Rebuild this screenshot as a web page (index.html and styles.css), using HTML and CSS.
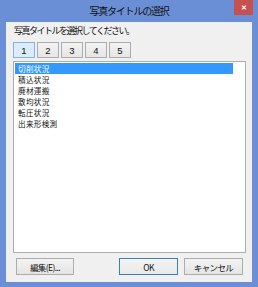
FILE: index.html
```html
<!DOCTYPE html>
<html lang="ja">
<head>
    <meta charset="UTF-8">
    <title>写真タイトルの選択</title>
    <link rel="stylesheet" href="styles.css">
</head>
<body>
    <div class="window">
        <div class="titlebar">
            <span></span>
            <span class="title">写真タイトルの選択</span>
            <span class="close">&#x2715;</span>
        </div>

        <div class="client">
            <p class="prompt">写真タイトルを選択してください。</p>

            <div class="tabs">
                <button class="tab active">1</button>
                <button class="tab">2</button>
                <button class="tab">3</button>
                <button class="tab">4</button>
                <button class="tab">5</button>
            </div>

            <ul class="listbox">
                <li class="item selected">切削状況</li>
                <li class="item">積込状況</li>
                <li class="item">廃材運搬</li>
                <li class="item">敷均状況</li>
                <li class="item">転圧状況</li>
                <li class="item">出来形検測</li>
            </ul>

            <div class="actions">
                <button class="btn edit">編集(E)...</button>
                <span class="spacer"></span>
                <button class="btn default">OK</button>
                <button class="btn">キャンセル</button>
            </div>
        </div>
    </div>
</body>
</html>
```

FILE: styles.css
```css
* {
    margin: 0;
    padding: 0;
    box-sizing: border-box;
    font-family: 'Noto Sans CJK JP', 'Noto Sans', sans-serif;
}

body {
    background-color: #6b8fd6;
}

.window {
    width: 258px;
    height: 287px;
    background-color: #6b8fd6;
    display: flex;
    flex-direction: column;
    padding: 0 6px 5px 6px;
}

/* タイトルバー */
.titlebar {
    height: 22px;
    display: grid;
    grid-template-columns: 1fr auto 1fr;
    align-items: start;
}

.title {
    font-size: 10px;
    letter-spacing: -1.2px;
    color: #111;
    line-height: 22px;
}

.close {
    justify-self: end;
    width: 19px;
    height: 15px;
    background-color: #c75050;
    color: white;
    font-size: 7px;
    font-weight: bold;
    line-height: 15px;
    text-align: center;
    margin-right: -1px;
}

.client {
    flex: 1;
    background-color: #f0f0f0;
    padding: 3px 6px 0 7px;
    display: flex;
    flex-direction: column;
}

.prompt {
    font-size: 9px;
    letter-spacing: -1.5px;
    line-height: 12px;
    color: #111;
    padding-left: 1px;
}

.tabs {
    display: flex;
    gap: 2px;
    margin-top: 5px;
}

.tab {
    width: 22px;
    height: 16px;
    border: 1px solid #acacac;
    background: linear-gradient(#f2f2f2, #e6e6e6);
    font-size: 9.5px;
    color: #111;
    font-family: 'Liberation Sans', sans-serif;
}

.tab.active {
    background: #dcecfc;
    border-color: #7eb4ea;
}

.listbox {
    list-style: none;
    margin-top: 3px;
    width: 233px;
    height: 192px;
    background-color: white;
    border: 1px solid #abadb3;
    padding: 1px 0 0 1px;
}

.item {
    width: 218px;
    height: 11px;
    font-size: 7.6px;
    line-height: 11px;
    letter-spacing: 0.3px;
    color: #111;
    padding-left: 3px;
}

.item.selected {
    background-color: #3399ff;
    color: white;
}

.actions {
    display: flex;
    gap: 6px;
    margin-top: 5px;
    padding-left: 3px;
}

.spacer {
    width: 33px;
}

.btn {
    width: 59px;
    height: 17px;
    border: 1px solid #acacac;
    background: linear-gradient(#f2f2f2, #e5e5e5);
    font-size: 8.5px;
    letter-spacing: -0.6px;
    color: #111;
}

.btn.edit {
    width: 58px;
}

.btn.default {
    border-color: #3c7fb1;
    background: linear-gradient(#f4f4f4, #e9e9e9);
}
```
